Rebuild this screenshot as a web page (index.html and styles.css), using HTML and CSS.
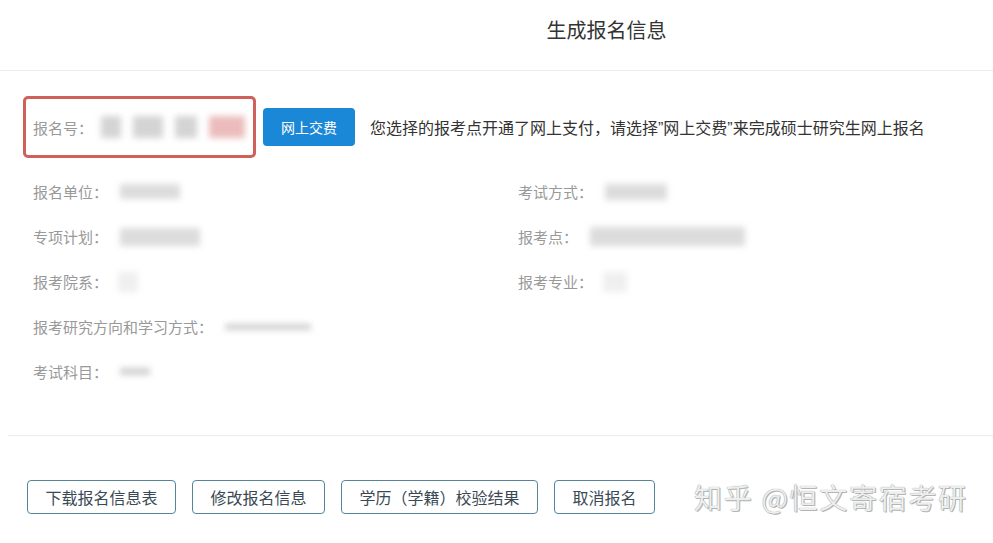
FILE: index.html
```html
<!DOCTYPE html>
<html lang="zh-CN">
<head>
<meta charset="utf-8">
<title>生成报名信息</title>
<link rel="stylesheet" href="styles.css">
</head>
<body>
<header class="header"><h1 class="title">生成报名信息</h1></header>
<main class="main">
  <div class="reg-row">
    <div class="reg-box">
      <span class="label">报名号：</span>
      <span class="blur-group">
        <span class="blur b-gray" style="width:20px"></span>
        <span class="blur b-gray" style="width:30px"></span>
        <span class="blur b-gray" style="width:22px"></span>
        <span class="blur b-pink" style="width:36px"></span>
      </span>
    </div>
    <button class="pay-btn">网上交费</button>
    <p class="pay-msg">您选择的报考点开通了网上支付，请选择<span class="q">”</span>网上交费<span class="q">”</span>来完成硕士研究生网上报名</p>
  </div>
  <div class="fields">
    <div class="field"><span class="label">报名单位：</span><span class="blur b-block" style="width:60px;height:15px"></span></div>
    <div class="field"><span class="label">考试方式：</span><span class="blur b-block" style="width:62px;height:16px"></span></div>
    <div class="field"><span class="label">专项计划：</span><span class="blur b-block" style="width:80px;height:18px"></span></div>
    <div class="field"><span class="label">报考点：</span><span class="blur b-block" style="width:155px;height:19px"></span></div>
    <div class="field"><span class="label">报考院系：</span><span class="blur b-faint" style="width:20px;height:20px"></span></div>
    <div class="field"><span class="label">报考专业：</span><span class="blur b-faint" style="width:24px;height:20px"></span></div>
    <div class="field wide"><span class="label">报考研究方向和学习方式：</span><span class="blur b-line" style="width:86px;height:6px"></span></div>
    <div class="field wide"><span class="label">考试科目：</span><span class="blur b-line" style="width:30px;height:7px"></span></div>
  </div>
</main>
<div class="divider"></div>
<footer class="actions">
  <button class="act-btn">下载报名信息表</button>
  <button class="act-btn">修改报名信息</button>
  <button class="act-btn">学历（学籍）校验结果</button>
  <button class="act-btn">取消报名</button>
  <span class="watermark">知乎 @恒文寄宿考研</span>
</footer>
</body>
</html>
```

FILE: styles.css
```css
* { box-sizing: border-box; }
html, body { margin: 0; padding: 0; background: #fff; }
body {
  font-family: "Noto Sans CJK SC", "Noto Sans", sans-serif;
  color: #333;
  width: 993px;
  height: 543px;
  overflow: hidden;
}
.header {
  height: 71px;
  border-bottom: 1px solid #ececec;
  padding-left: 220px;
  display: flex;
  align-items: center;
  justify-content: center;
}
.title {
  margin: 0;
  margin-top: -12px;
  font-size: 20px;
  font-weight: normal;
  color: #333;
}
.main { padding-top: 25px; }
.reg-row {
  display: flex;
  align-items: center;
  padding-left: 23px;
}
.reg-box {
  width: 233px;
  height: 62px;
  border: 3px solid #cf605a;
  border-radius: 5px;
  padding-left: 7px;
  display: flex;
  align-items: center;
}
.label {
  font-size: 15px;
  color: #999;
  white-space: nowrap;
}
.blur-group { display: flex; gap: 12px; margin-left: 8px; }
.blur {
  display: inline-block;
  filter: blur(3px);
}
.b-gray { height: 22px; background: #d4d4d4; }
.b-pink { height: 22px; background: #ecbcbc; }
.b-block { background: #dcdcdc; margin-left: 12px; }
.b-faint { background: #efefef; margin-left: 10px; }
.b-line { background: #cfcfcf; margin-left: 12px; }
.pay-btn {
  margin-left: 7px;
  width: 92px;
  height: 38px;
  border: none;
  border-radius: 4px;
  background: #1b87d7;
  color: #fff;
  font-family: inherit;
  font-size: 14px;
}
.pay-msg {
  margin: 0 0 0 15px;
  font-size: 16px;
  color: #333;
  white-space: nowrap;
}
.q { font-family: "Liberation Sans", sans-serif; }
.fields {
  margin-top: 11px;
  padding-left: 33px;
  display: grid;
  grid-template-columns: 485px 1fr;
}
.field {
  height: 45px;
  display: flex;
  align-items: center;
}
.field.wide { grid-column: 1 / 3; }
.divider {
  margin: 41px 0 0 8px;
  border-top: 1px solid #ececec;
}
.actions {
  display: flex;
  align-items: center;
  gap: 16px;
  padding: 41px 0 0 27px;
}
.act-btn {
  height: 34px;
  padding: 0 17.5px;
  background: #fff;
  border: 1px solid #54859b;
  border-radius: 4px;
  font-family: inherit;
  font-size: 16px;
  color: #3a4a55;
}
.watermark {
  margin-left: 23px;
  font-size: 28px;
  color: #eeeeee;
  text-shadow: 0 0 1px #7a7a7a, 1px 1px 0 #bcbcbc;
  white-space: nowrap;
  letter-spacing: 1.7px;
}
```
